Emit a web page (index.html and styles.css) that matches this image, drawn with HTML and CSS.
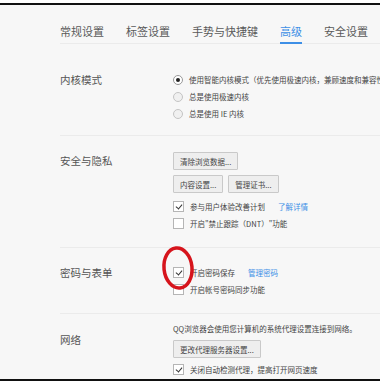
FILE: index.html
```html
<!doctype html>
<html lang="zh-CN">
    <head>
        <meta charset="UTF-8" />
        <meta name="viewport" content="width=device-width, initial-scale=1.0" />
        <title>设置 - 高级</title>
        <link rel="stylesheet" href="styles.css">
    </head>
    <body>
        <div class="screen">
            <nav class="tabs">
                <span class="tab">常规设置</span>
                <span class="tab">标签设置</span>
                <span class="tab">手势与快捷键</span>
                <span class="tab active">高级</span>
                <span class="tab">安全设置</span>
            </nav>

            <section class="group kernel">
                <div class="label">内核模式</div>
                <div class="opts">
                    <div class="row"><span class="radio on"></span>使用智能内核模式（优先使用极速内核，兼顾速度和兼容性）</div>
                    <div class="row"><span class="radio"></span>总是使用极速内核</div>
                    <div class="row"><span class="radio"></span>总是使用 IE 内核</div>
                </div>
            </section>

            <section class="group">
                <div class="label">安全与隐私</div>
                <div class="opts">
                    <div class="btns"><button class="btn">清除浏览数据...</button></div>
                    <div class="btns">
                        <button class="btn">内容设置...</button>
                        <button class="btn">管理证书...</button>
                    </div>
                    <div class="row"><span class="check on"></span>参与用户体验改善计划<a class="link">了解详情</a></div>
                    <div class="row"><span class="check"></span>开启"禁止跟踪（DNT）"功能</div>
                </div>
            </section>

            <section class="group">
                <div class="label">密码与表单</div>
                <div class="opts">
                    <div class="row"><span class="check on"></span>开启密码保存<a class="link">管理密码</a></div>
                    <div class="row"><span class="check"></span>开启帐号密码同步功能</div>
                </div>
                <!-- red marker drawn over the checkbox -->
                <svg class="mark" width="36" height="46" viewBox="0 0 36 46">
                    <ellipse cx="18" cy="23" rx="14" ry="20" fill="none" stroke="#d6141c" stroke-width="3.5" transform="rotate(-6 18 23)" />
                </svg>
            </section>

            <section class="group net">
                <div class="label">网络</div>
                <div class="opts">
                    <div class="row">QQ浏览器会使用您计算机的系统代理设置连接到网络。</div>
                    <div class="btns"><button class="btn">更改代理服务器设置...</button></div>
                    <div class="row"><span class="check on"></span>关闭自动检测代理，提高打开网页速度</div>
                </div>
            </section>
        </div>
    </body>
</html>
```

FILE: styles.css
```css
body {
    margin: 0;
    background: #ffffff;
    font-family: "Noto Sans CJK SC", "Noto Sans", sans-serif;
    color: #555;
    overflow: hidden;
}
.screen {
    width: 380px;
    height: 374px;
    margin-top: 3px;
    background: #f7f7f7;
    border-top: 2px solid #111;
    border-bottom: 2px solid #111;
    overflow: hidden;
}
.tabs {
    display: flex;
    gap: 22px;
    margin-left: 60px;
    padding-top: 18px;
    border-bottom: 1px solid #ebebeb;
}
.tab {
    font-size: 11px;
    line-height: 17px;
    padding-bottom: 3px;
    color: #5a5a5a;
    white-space: nowrap;
}
.tab.active {
    color: #3d8fe6;
    border-bottom: 2px solid #3d8fe6;
    padding-bottom: 1px;
    margin-bottom: -1px;
}
.group {
    position: relative;
    display: grid;
    grid-template-columns: 113px 1fr;
    margin-left: 60px;
    padding: 16px 0 15px;
    border-bottom: 1px solid #ebebeb;
}
.group.kernel {
    padding: 27px 0 13px;
}
.group.net {
    padding-top: 4px;
    border-bottom: none;
}
.label {
    font-size: 10.5px;
    line-height: 17px;
    color: #555;
}
.net .label {
    padding-top: 13px;
}
.opts {
    display: flex;
    flex-direction: column;
    min-width: 0;
}
.row {
    display: flex;
    align-items: center;
    height: 17px;
    font-size: 7.5px;
    color: #444;
    white-space: nowrap;
}
.radio {
    width: 8px;
    height: 8px;
    border: 1px solid #c4c4c4;
    border-radius: 50%;
    background: #f0f0f0;
    margin: 0 6px 0 0;
    position: relative;
    flex: none;
}
.radio.on {
    background: #fff;
    border-color: #999;
}
.radio.on::after {
    content: "";
    position: absolute;
    left: 2px;
    top: 2px;
    width: 4px;
    height: 4px;
    border-radius: 50%;
    background: #222;
}
.check {
    width: 9px;
    height: 9px;
    border: 1px solid #b5b5b5;
    background: #fff;
    margin-right: 6px;
    position: relative;
    flex: none;
}
.check.on::after {
    content: "";
    position: absolute;
    left: 2.5px;
    top: 0.5px;
    width: 3px;
    height: 5px;
    border: solid #333;
    border-width: 0 1.5px 1.5px 0;
    transform: rotate(40deg);
}
.link {
    color: #3d8fe6;
    margin-left: 13px;
}
.btns {
    display: flex;
    gap: 5px;
    margin-bottom: 5px;
}
.btn {
    height: 18px;
    padding: 0 6px;
    font-family: inherit;
    font-size: 7.5px;
    color: #444;
    background: #eeeeee;
    border: 1px solid #c9c9c9;
    border-radius: 1px;
}
.net .row:first-child {
    height: 20px;
}
.net .btns {
    margin: 2px 0 3px;
}
.mark {
    position: absolute;
    left: 100px;
    top: -3px;
}
```
